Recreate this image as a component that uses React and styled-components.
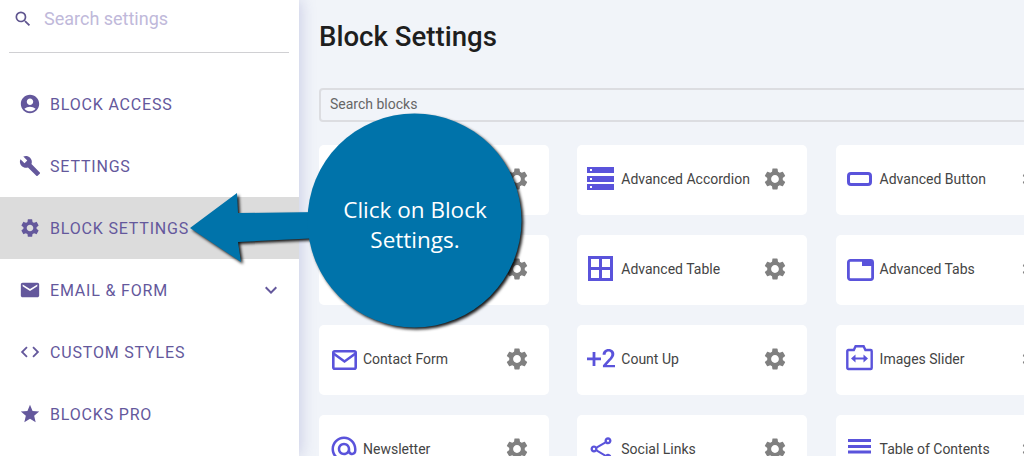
import React from 'react';
import styled, { createGlobalStyle } from 'styled-components';
import {
  MdAccountCircle,
  MdBuild,
  MdSettings,
  MdEmail,
  MdCode,
  MdStar,
  MdExpandMore,
  MdSearch,
  MdAlternateEmail,
  MdOutlineShare,
} from 'react-icons/md';

const Global = createGlobalStyle`
  html, body {
    margin: 0;
    height: 456px;
    overflow: hidden;
    background: #f1f4f9;
    font-family: Roboto, "Liberation Sans", sans-serif;
  }
`;

const Page = styled.div`
  position: relative;
  display: flex;
  width: 1024px;
  height: 456px;
  overflow: hidden;
`;

const Sidebar = styled.aside`
  position: relative;
  z-index: 1;
  flex: 0 0 299px;
  background: #fff;
  box-shadow: 2px 0 14px rgba(120, 125, 190, 0.32);
`;

const SettingsSearch = styled.div`
  display: flex;
  align-items: center;
  gap: 11px;
  height: 53px;
  margin: 0 10px 20px 9px;
  padding: 0 0 15px 4px;
  box-sizing: border-box;
  border-bottom: 1px solid #d0d0d3;
  color: #c0b9da;
  font-size: 18px;
  svg {
    color: #5f558f;
    flex: none;
  }
`;

const NavItem = styled.div`
  display: flex;
  align-items: center;
  height: 62px;
  padding: 0 16px 0 19px;
  box-sizing: border-box;
  gap: 9px;
  color: #64589c;
  font-size: 16px;
  letter-spacing: 0.82px;
  text-transform: uppercase;
  background: ${(p) => (p.$active ? '#dcdcdc' : 'transparent')};
  svg {
    flex: none;
  }
`;

const Chevron = styled(MdExpandMore)`
  margin-left: auto;
`;

const Main = styled.main`
  flex: 1;
  min-width: 0;
  padding-left: 20px;
`;

const Title = styled.h1`
  margin: 0;
  height: 88px;
  padding-top: 20px;
  box-sizing: border-box;
  font-size: 27.6px;
  line-height: 34px;
  font-weight: 500;
  color: #1e1e1e;
`;

const BlockSearch = styled.div`
  display: flex;
  align-items: center;
  width: 760px;
  height: 34px;
  margin-bottom: 23px;
  padding: 0 0 3px 9px;
  box-sizing: border-box;
  border: 2px solid #dcdde1;
  border-radius: 4px;
  font-size: 14px;
  color: #666;
`;

const CardGrid = styled.div`
  display: grid;
  grid-template-columns: repeat(3, 230px);
  grid-auto-rows: 70px;
  column-gap: 28.3px;
  row-gap: 20px;
  width: 760px;
`;

const Card = styled.div`
  display: grid;
  grid-template-columns: 34px 1fr 26px;
  align-items: center;
  padding: 0 19.5px 2px 10px;
  background: #fff;
  border-radius: 5px;
  font-size: 14px;
  color: #444;
  svg {
    display: block;
  }
`;

const Gear = styled(MdSettings)`
  color: #808080;
`;

const BlockIcon = styled.svg`
  width: 28px;
  height: 28px;
  fill: #5a53db;
`;

const Callout = styled.div`
  position: absolute;
  z-index: 2;
  left: 180px;
  top: 100px;
  width: 350px;
  height: 240px;
`;

const CalloutShape = styled.svg`
  display: block;
  width: 350px;
  height: 240px;
  filter: drop-shadow(2px 2px 1.5px rgba(0, 0, 0, 0.9));
`;

const CalloutText = styled.div`
  position: absolute;
  left: 128px;
  top: 95px;
  width: 214px;
  text-align: center;
  font-family: "Open Sans", sans-serif;
  font-size: 22.5px;
  line-height: 30px;
  color: #fff;
`;

const AccordionIcon = () => (
  <BlockIcon viewBox="0 0 28 28">
    <path d="M0 2h27v6H0zM0 11h27v6H0zM0 19h27v6H0z" />
    <path fill="#fff" d="M3 4h2v2H3zM3 13h2v2H3zM3 21h2v2H3z" />
  </BlockIcon>
);

const TableIcon = () => (
  <BlockIcon viewBox="0 0 28 28">
    <path fillRule="evenodd" d="M1 1h25v25H1zM4 4v8h8V4zM15 4v8h8V4zM4 15v8h8v-8zM15 15v8h8v-8z" />
  </BlockIcon>
);

const ButtonIcon = () => (
  <BlockIcon viewBox="0 0 28 28">
    <rect x="2.500" y="8.500" width="22" height="11" rx="2.500" fill="none" stroke="#5a53db" strokeWidth="3" />
  </BlockIcon>
);

const TabsIcon = () => (
  <BlockIcon viewBox="0 0 28 28">
    <rect x="2.400" y="5.400" width="24.200" height="19.200" rx="2" fill="none" stroke="#5a53db" strokeWidth="2.800" />
    <path d="M16 5h11v6H16z" />
  </BlockIcon>
);

const MailIcon = () => (
  <BlockIcon viewBox="0 0 28 28">
    <rect x="4.300" y="6.300" width="22.400" height="17.400" rx="1.500" fill="none" stroke="#5a53db" strokeWidth="2.600" />
    <path d="M4.500 8.500l11 8 11-8" fill="none" stroke="#5a53db" strokeWidth="2.600" />
  </BlockIcon>
);

const PlusTwoIcon = () => (
  <BlockIcon viewBox="0 0 28 28">
    <g transform="translate(-2.800 -2.900) scale(1.4)">
      <path d="M16.050 16.290l2.860-3.070c.38-.39.72-.79 1.040-1.180.32-.39.59-.78.82-1.170.23-.39.41-.78.54-1.170s.19-.79.19-1.180c0-.53-.09-1.020-.27-1.460-.18-.44-.44-.81-.78-1.110-.34-.31-.77-.54-1.260-.71-.51-.16-1.080-.24-1.720-.24-.69 0-1.310.11-1.850.32-.54.21-1 .51-1.360.88-.37.37-.65.8-.84 1.300-.18.47-.27.97-.28 1.500h2.140c.01-.31.05-.6.14-.87.09-.29.23-.54.4-.75.18-.21.41-.37.68-.49.27-.12.6-.18.96-.18.31 0 .58.05.81.15.23.1.43.25.59.43.16.18.28.4.37.65.08.25.13.52.13.81 0 .22-.03.43-.08.65-.06.22-.15.45-.29.7-.14.25-.32.53-.56.83-.23.3-.52.65-.88 1.030l-4.170 4.550V18H22v-1.710h-5.950zM8 7H6v4H2v2h4v4h2v-4h4v-2H8V7z" />
    </g>
  </BlockIcon>
);

const SliderIcon = () => (
  <BlockIcon viewBox="0 0 28 28">
    <path
      d="M2.300 5h5.500l1.800-3.800h8l1.800 3.800h5.300a1 1 0 0 1 1 1v17a1 1 0 0 1-1 1h-22.400a1 1 0 0 1-1-1V6a1 1 0 0 1 1-1z"
      fill="none"
      stroke="#5a53db"
      strokeWidth="2.400"
    />
    <path d="M5 13.500l4.500-4v3h8v-3l4.500 4-4.500 4v-3h-8v3z" />
  </BlockIcon>
);

const NewsletterIcon = () => <MdAlternateEmail size={30} color="#5a53db" />;

const SocialIcon = () => <MdOutlineShare size={28} color="#5a53db" />;

const TocIcon = () => (
  <BlockIcon viewBox="0 0 28 28">
    <path d="M2 4h23v3H2zM2 10h23v3H2zM2 15.500h23v3H2zM2 21h15v3H2z" />
  </BlockIcon>
);

const navItems = [
  { label: 'Block Access', icon: MdAccountCircle },
  { label: 'Settings', icon: MdBuild },
  { label: 'Block Settings', icon: MdSettings, active: true },
  { label: 'Email & Form', icon: MdEmail, expandable: true },
  { label: 'Custom Styles', icon: MdCode },
  { label: 'Blocks Pro', icon: MdStar },
];

const blocks = [
  { id: 'hidden-1' },
  { id: 'accordion', label: 'Advanced Accordion', icon: AccordionIcon },
  { id: 'button', label: 'Advanced Button', icon: ButtonIcon },
  { id: 'hidden-2' },
  { id: 'table', label: 'Advanced Table', icon: TableIcon },
  { id: 'tabs', label: 'Advanced Tabs', icon: TabsIcon },
  { id: 'contact', label: 'Contact Form', icon: MailIcon },
  { id: 'count', label: 'Count Up', icon: PlusTwoIcon },
  { id: 'slider', label: 'Images Slider', icon: SliderIcon },
  { id: 'newsletter', label: 'Newsletter', icon: NewsletterIcon },
  { id: 'social', label: 'Social Links', icon: SocialIcon },
  { id: 'toc', label: 'Table of Contents', icon: TocIcon },
];

const App = () => {
  return (
    <Page>
      <Global />
      <Sidebar>
        <SettingsSearch>
          <MdSearch size={20} />
          Search settings
        </SettingsSearch>
        {navItems.map((item) => (
          <NavItem key={item.label} $active={item.active}>
            <item.icon size={22} />
            {item.label}
            {item.expandable && <Chevron size={24} />}
          </NavItem>
        ))}
      </Sidebar>
      <Main>
        <Title>Block Settings</Title>
        <BlockSearch>Search blocks</BlockSearch>
        <CardGrid>
          {blocks.map((block) => (
            <Card key={block.id}>
              {block.icon ? <block.icon /> : <span />}
              <span>{block.label}</span>
              <Gear size={26} />
            </Card>
          ))}
        </CardGrid>
      </Main>
      <Callout>
        <CalloutShape viewBox="0 0 350 240">
          <path
            fill="#0073aa"
            d="M10 128 L57 93 L58 113 L140 112 L140 138 L58 142 L61 162 Z"
          />
          <circle cx="234.500" cy="120.500" r="107" fill="#0073aa" />
        </CalloutShape>
        <CalloutText>
          Click on Block
          <br />
          Settings.
        </CalloutText>
      </Callout>
    </Page>
  );
};

export default App;
